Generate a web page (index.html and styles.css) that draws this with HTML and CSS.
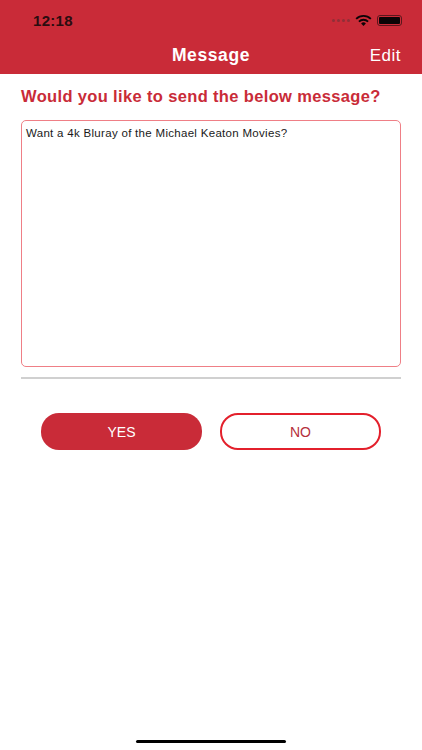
FILE: index.html
```html
<!DOCTYPE html>
<html lang="en">
<head>
  <meta charset="UTF-8">
  <meta name="viewport" content="width=device-width, initial-scale=1">
  <title>Message</title>
  <link rel="stylesheet" href="styles.css">
</head>
<body>
  <div class="header">
    <!-- Status bar -->
    <div class="status">
      <span class="time">12:18</span>
      <div class="status-icons">
        <span class="signal"><i></i><i></i><i></i><i></i></span>
        <svg class="wifi" width="17" height="11" viewBox="0 0 18 12">
          <path d="M1 4.2a11.6 11.6 0 0 1 16 0" fill="none" stroke="#0b0406" stroke-width="2"/>
          <path d="M4 7.2a7.3 7.3 0 0 1 10 0" fill="none" stroke="#0b0406" stroke-width="2"/>
          <path d="M6.4 9.3a3.6 3.6 0 0 1 5.2 0L9 12z" fill="#0b0406"/>
        </svg>
        <span class="battery"><b></b></span>
      </div>
    </div>
    <div class="nav">
      <span class="nav-title">Message</span>
      <span class="nav-edit">Edit</span>
    </div>
  </div>

  <div class="content">
    <h1>Would you like to send the below message?</h1>
    <div class="message">Want a 4k Bluray of the Michael Keaton Movies?</div>
    <hr class="divider">
    <div class="buttons">
      <button class="btn btn-yes">YES</button>
      <button class="btn btn-no">NO</button>
    </div>
  </div>

  <div class="home-bar"></div>
</body>
</html>
```

FILE: styles.css
```css
* {
  box-sizing: border-box;
}
body {
  margin: 0;
  width: 422px;
  height: 750px;
  background: #fff;
  font-family: "Liberation Sans", Arial, sans-serif;
  display: flex;
  flex-direction: column;
  overflow: hidden;
}
.header {
  background: #c92b38;
  height: 74px;
  flex-shrink: 0;
}
.status {
  height: 37px;
  padding: 4px 20px 0 33px;
  display: flex;
  align-items: center;
  justify-content: space-between;
}
.time {
  font-size: 15px;
  font-weight: bold;
  letter-spacing: 0.3px;
  color: #2a0d10;
}
.status-icons {
  display: flex;
  align-items: center;
  gap: 5px;
}
.signal {
  display: flex;
  gap: 2px;
}
.signal i {
  width: 3px;
  height: 3px;
  border-radius: 50%;
  background: #8f2f38;
}
.battery {
  width: 25px;
  height: 11px;
  border: 1px solid #5a161c;
  border-radius: 3px;
  padding: 1px;
  display: flex;
}
.battery b {
  flex: 1;
  background: #0b0406;
  border-radius: 1px;
}
.nav {
  height: 37px;
  padding: 0 21px;
  display: flex;
  align-items: center;
  justify-content: center;
  position: relative;
  color: #fff;
}
.nav-title {
  font-size: 17.5px;
  font-weight: bold;
  letter-spacing: 0.6px;
}
.nav-edit {
  position: absolute;
  right: 21px;
  font-size: 17px;
  letter-spacing: 0.5px;
}
.content {
  padding: 14px 21px 0;
}
h1 {
  margin: 0;
  font-size: 16.5px;
  line-height: 17px;
  font-weight: bold;
  letter-spacing: 0.35px;
  color: #c92b38;
}
.message {
  margin-top: 15px;
  height: 247px;
  border: 1.5px solid #ef7f86;
  border-radius: 5px;
  padding: 5px 4px;
  font-size: 11.5px;
  line-height: 14px;
  letter-spacing: 0.3px;
  color: #1a1a1a;
}
.divider {
  margin: 10px 0 0;
  border: 0;
  height: 1.5px;
  background: #d0d0d0;
}
.buttons {
  margin-top: 34px;
  padding: 0 20px;
  display: flex;
  gap: 18px;
}
.btn {
  width: 161px;
  height: 37px;
  border-radius: 18px;
  font-family: inherit;
  font-size: 14px;
  padding: 1px 0 0;
}
.btn-yes {
  background: #c92b38;
  border: none;
  color: #fff;
}
.btn-no {
  background: #fff;
  border: 2px solid #e3202c;
  color: #b5303c;
}
.home-bar {
  position: absolute;
  left: 136px;
  top: 740px;
  width: 150px;
  height: 3px;
  border-radius: 2px;
  background: #000;
}
```
